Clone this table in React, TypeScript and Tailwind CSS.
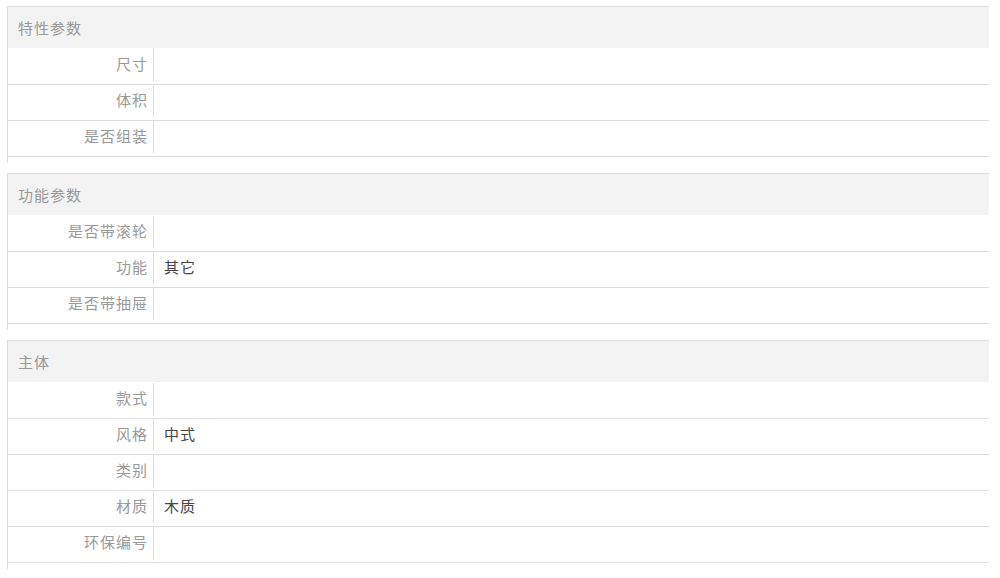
const groups = [
  {
    title: "特性参数",
    rows: [
      { label: "尺寸", value: "" },
      { label: "体积", value: "" },
      { label: "是否组装", value: "" },
    ],
  },
  {
    title: "功能参数",
    rows: [
      { label: "是否带滚轮", value: "" },
      { label: "功能", value: "其它" },
      { label: "是否带抽屉", value: "" },
    ],
  },
  {
    title: "主体",
    rows: [
      { label: "款式", value: "" },
      { label: "风格", value: "中式" },
      { label: "类别", value: "" },
      { label: "材质", value: "木质" },
      { label: "环保编号", value: "" },
    ],
  },
];

export default function App() {
  return (
    <div
      className="min-h-[578px] bg-white pl-[7px] pt-[6px] text-[15px] tracking-[1px]"
      style={{ fontFamily: '"Noto Sans CJK SC", "Noto Sans", sans-serif' }}
    >
      {groups.map((g) => (
        <section key={g.title} className="mb-[10px] w-[982px] border-l border-t border-[#dcdcdc] pb-[6px]">
          <div className="flex h-[41px] items-center bg-[#f3f3f3] px-[10px] pt-px text-[#999]">{g.title}</div>
          <div className="pt-px">
            {g.rows.map((r) => (
              <div key={r.label} className="flex h-[36px] items-start border-b border-[#dcdcdc]">
                <div className="h-[32px] w-[146px] shrink-0 border-r border-[#dcdcdc] pr-[5px] text-right leading-[30px] text-[#999]">
                  {r.label}
                </div>
                <div className="h-[32px] pl-[10px] leading-[30px] text-[#444]">{r.value}</div>
              </div>
            ))}
          </div>
        </section>
      ))}
    </div>
  );
}
